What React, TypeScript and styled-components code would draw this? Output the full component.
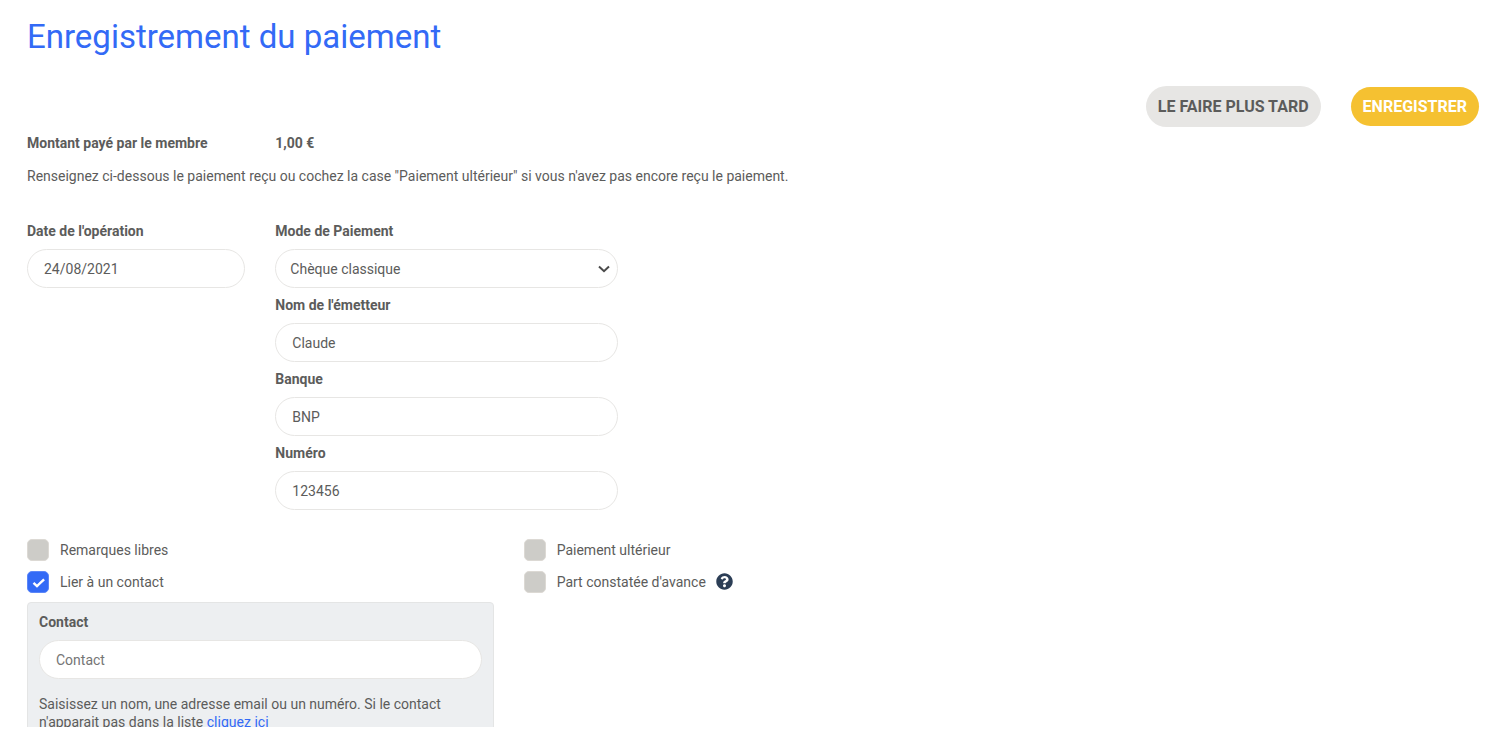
import React, { useState } from "react";
import styled, { createGlobalStyle } from "styled-components";

const GlobalStyle = createGlobalStyle`
  *, *::before, *::after { box-sizing: border-box; }
  body {
    margin: 0;
    background: #fff;
    color: #5c5c5b;
    font-family: Roboto, "Liberation Sans", sans-serif;
    font-size: 14px;
    line-height: 18px;
  }
  button, input, select { font: inherit; color: inherit; }
`;

const Shell = styled.div`
  height: 100vh;
  padding-bottom: 27px;
`;

const Form = styled.form`
  height: 100%;
  overflow: hidden;
  padding: 17px 17px 0 27px;
`;

const Title = styled.h1`
  margin: 0;
  color: #336af6;
  font-size: 33px;
  font-weight: 400;
  line-height: 40px;
`;

const Actions = styled.div`
  display: flex;
  justify-content: flex-end;
  align-items: center;
  gap: 30px;
  margin-top: 29px;
  padding-right: 8px;
`;

const Button = styled.button<{ $primary?: boolean }>`
  height: ${(p) => (p.$primary ? 39 : 41)}px;
  padding: 0 12px;
  border: 0;
  border-radius: 21px;
  background: ${(p) => (p.$primary ? "#f5c131" : "#e7e6e4")};
  color: ${(p) => (p.$primary ? "#fff" : "#5c5c5b")};
  font-size: 16px;
  font-weight: 700;
  text-transform: uppercase;
  white-space: nowrap;
  cursor: pointer;
`;

const Grid = styled.div<{ $top: number }>`
  display: grid;
  grid-template-columns: repeat(12, minmax(0, 1fr));
  column-gap: 30px;
  margin-top: ${(p) => p.$top}px;
`;

const Column = styled.div<{ $span: number }>`
  grid-column: span ${(p) => p.$span};
`;

const Strong = styled.strong<{ $span: number }>`
  grid-column: span ${(p) => p.$span};
  font-weight: 700;
  white-space: nowrap;
`;

const Intro = styled.p`
  margin: 15px 0 0;
`;

const Field = styled.div`
  display: flex;
  flex-direction: column;
  gap: 9px;

  & + & { margin-top: 8px; }
`;

const Label = styled.label`
  font-weight: 700;
`;

const TextInput = styled.input`
  width: 100%;
  height: 39px;
  padding: 0 16px;
  border: 1px solid #e7e6e4;
  border-radius: 20px;
  background: #fff;
  outline: none;

  &::placeholder { color: #757575; opacity: 1; }
`;

const SelectBox = styled.div`
  display: grid;
  align-items: center;

  & > * { grid-area: 1 / 1; }
`;

const Select = styled.select`
  appearance: none;
  width: 100%;
  height: 39px;
  padding: 0 32px 0 14px;
  border: 1px solid #e7e6e4;
  border-radius: 20px;
  background: #fff;
  outline: none;
`;

const Chevron = styled.svg`
  justify-self: end;
  width: 12px;
  height: 8px;
  margin-right: 8px;
  pointer-events: none;
`;

const CheckRow = styled.div`
  display: flex;
  align-items: center;
  height: 22px;

  & + & { margin-top: 10px; }
`;

const CheckLabel = styled.label`
  display: flex;
  align-items: center;
  gap: 11px;
  line-height: 20px;
  cursor: pointer;
`;

const CheckBox = styled.span`
  display: grid;
  width: 22px;
  height: 22px;

  & > * { grid-area: 1 / 1; }
  & > svg { pointer-events: none; }
`;

const CheckInput = styled.input`
  appearance: none;
  width: 22px;
  height: 22px;
  margin: 0;
  border: 1px solid #dcd9d4;
  border-radius: 5px;
  background: #cdccc8;

  &:checked {
    border-color: #5c87f8;
    background: #336af6;
  }
`;

const HelpButton = styled.button`
  display: flex;
  margin-left: 10px;
  padding: 0 0 2px;
  border: 0;
  background: none;
  cursor: pointer;
`;

const Panel = styled.section`
  margin-top: 9px;
  padding: 10px 11px 16px;
  border: 1px solid #e4e5e5;
  border-radius: 4px;
  background: #edeff1;
`;

const Hint = styled.p`
  margin: 16px 0 0;
`;

const Link = styled.a`
  color: #336af6;
  text-decoration: none;
`;

function Check({ label, checked = false, children }: { label: string; checked?: boolean; children?: React.ReactNode }) {
  const [on, setOn] = useState(checked);
  return (
    <CheckRow>
      <CheckLabel>
        <CheckBox>
          <CheckInput type="checkbox" checked={on} onChange={(e) => setOn(e.target.checked)} />
          {on && (
            <svg width="22" height="22" viewBox="0 0 22 22" fill="none" aria-hidden="true">
              <path d="M6.500 11.800l3.500 3.300 7.100-6.700" stroke="#fff" strokeWidth="2.400" />
            </svg>
          )}
        </CheckBox>
        {label}
      </CheckLabel>
      {children}
    </CheckRow>
  );
}

function TextField({ id, label, value, placeholder }: { id: string; label: string; value?: string; placeholder?: string }) {
  return (
    <Field>
      <Label htmlFor={id}>{label}</Label>
      <TextInput id={id} type="text" defaultValue={value} placeholder={placeholder} />
    </Field>
  );
}

export default function App() {
  return (
    <Shell>
      <GlobalStyle />
      <Form onSubmit={(e) => e.preventDefault()}>
        <Title>Enregistrement du paiement</Title>
        <Actions>
          <Button type="button">Le faire plus tard</Button>
          <Button type="submit" $primary>Enregistrer</Button>
        </Actions>

        <Grid $top={7}>
          <Strong $span={2}>Montant payé par le membre</Strong>
          <Strong $span={3}>1,00 €</Strong>
        </Grid>
        <Intro>
          Renseignez ci-dessous le paiement reçu ou cochez la case "Paiement ultérieur" si vous n'avez pas encore reçu le paiement.
        </Intro>

        <Grid $top={37}>
          <Column $span={2}>
            <TextField id="date" label="Date de l'opération" value="24/08/2021" />
          </Column>
          <Column $span={3}>
            <Field>
              <Label htmlFor="mode">Mode de Paiement</Label>
              <SelectBox>
                <Select id="mode">
                  <option>Chèque classique</option>
                </Select>
                <Chevron viewBox="0 0 12 8" fill="none" aria-hidden="true">
                  <path d="M1 1.5l5 4.7 5-4.7" stroke="#4a4a4a" strokeWidth="2" />
                </Chevron>
              </SelectBox>
            </Field>
            <TextField id="emetteur" label="Nom de l'émetteur" value="Claude" />
            <TextField id="banque" label="Banque" value="BNP" />
            <TextField id="numero" label="Numéro" value="123456" />
          </Column>
        </Grid>

        <Grid $top={29}>
          <Column $span={4}>
            <Check label="Remarques libres" />
            <Check label="Lier à un contact" checked />
            <Panel>
              <TextField id="contact" label="Contact" placeholder="Contact" />
              <Hint>
                Saisissez un nom, une adresse email ou un numéro. Si le contact n'apparait pas dans la liste <Link href="#">cliquez ici</Link>
              </Hint>
            </Panel>
          </Column>
          <Column $span={4}>
            <Check label="Paiement ultérieur" />
            <Check label="Part constatée d'avance">
              <HelpButton type="button" aria-label="Aide">
                <svg width="17" height="17" viewBox="0 0 512 512" aria-hidden="true">
                  <path
                    fill="#2c3e56"
                    d="M504 256c0 137-111 248-248 248S8 393 8 256C8 119.100 119 8 256 8s248 111.100 248 248zM262.700 90c-54.500 0-89.300 23-116.500 63.800-3.500 5.300-2.400 12.400 2.700 16.300l34.700 26.300c5.200 3.900 12.600 3 16.700-2.100 17.900-22.700 30.100-35.800 57.300-35.800 20.400 0 45.700 13.100 45.700 33 0 15-12.400 22.700-32.500 34C247.100 238.500 216 254.900 216 296v4c0 6.600 5.400 12 12 12h56c6.600 0 12-5.400 12-12v-1.300c0-28.500 83.200-29.600 83.200-106.700 0-58-60.200-102-116.500-102zM256 338c-25.400 0-46 20.600-46 46s20.600 46 46 46 46-20.600 46-46-20.600-46-46-46z"
                  />
                </svg>
              </HelpButton>
            </Check>
          </Column>
        </Grid>
      </Form>
    </Shell>
  );
}
